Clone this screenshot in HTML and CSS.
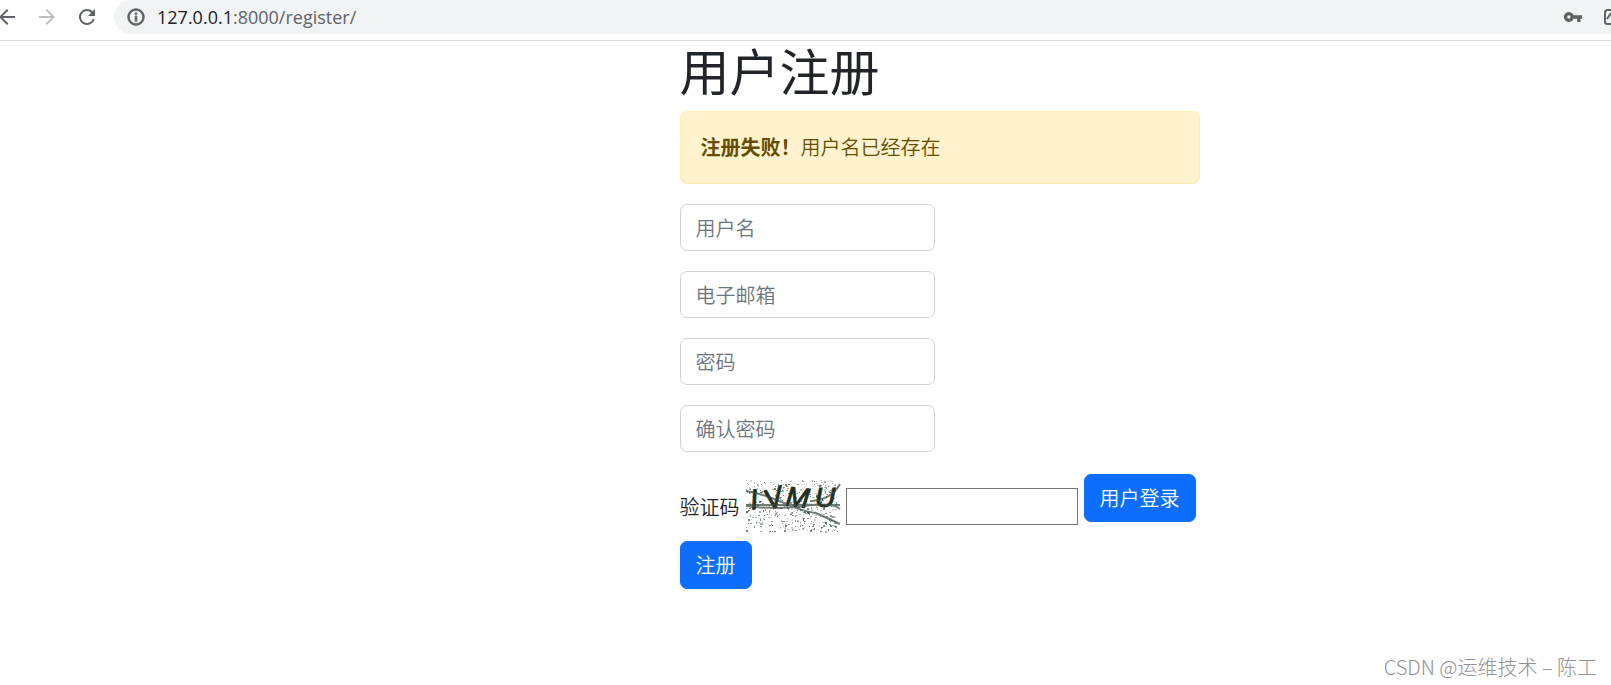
FILE: index.html
```html
<!DOCTYPE html>
<html lang="zh-CN">
<head>
<meta charset="utf-8">
<meta name="viewport" content="width=device-width, initial-scale=1">
<title>用户注册</title>
<link rel="stylesheet" href="styles.css">
</head>
<body>
<header class="toolbar">
  <nav class="nav-buttons">
    <button type="button" class="icon-button" aria-label="后退"><svg viewBox="0 0 24 24"><path d="M20 11H7.8l5.6-5.6L12 4l-8 8 8 8 1.4-1.4L7.8 13H20z"/></svg></button>
    <button type="button" class="icon-button muted" aria-label="前进"><svg viewBox="0 0 24 24"><path d="M12 4l-1.4 1.4 5.6 5.6H4v2h12.2l-5.6 5.6L12 20l8-8z"/></svg></button>
    <button type="button" class="icon-button" aria-label="刷新"><svg viewBox="0 0 24 24"><path d="M17.65 6.35A8 8 0 1 0 19.73 14h-2.08A6 6 0 1 1 12 6c1.66 0 3.14.69 4.22 1.78L13 11h7V4z"/></svg></button>
  </nav>
  <div class="address">
    <svg class="info" viewBox="0 0 24 24"><path d="M11 7h2v2h-2zm0 4h2v6h-2zm1-9a10 10 0 1 0 0 20 10 10 0 0 0 0-20zm0 18a8 8 0 1 1 0-16 8 8 0 0 1 0 16z"/></svg>
    <span class="url"><span class="host">127.0.0.1</span>:8000/register/</span>
    <svg class="key" viewBox="0 0 24 24"><path d="M12.65 10A6 6 0 1 0 12.65 14H17v4h4v-4h2v-4zM7 14a2 2 0 1 1 0-4 2 2 0 0 1 0 4z"/></svg>
    <svg class="edge" viewBox="0 0 8 18"><path d="M9 2H4.500Q2 2 2 4.500v9Q2 16 4.500 16H9M4 11l4-6" /></svg>
  </div>
</header>
<main class="page">
  <h1 class="title">用户注册</h1>
  <div class="alert" role="alert"><strong>注册失败！</strong>用户名已经存在</div>
  <form class="form">
    <input class="field" type="text" placeholder="用户名" aria-label="用户名">
    <input class="field" type="email" placeholder="电子邮箱" aria-label="电子邮箱">
    <input class="field" type="password" placeholder="密码" aria-label="密码">
    <input class="field" type="password" placeholder="确认密码" aria-label="确认密码">
    <div class="verify">
      <div class="verify-code">
        <label for="code">验证码</label>
        <svg class="captcha" viewBox="0 0 94 53" role="img" aria-label="验证码图片">
          <g class="specks"></g>
          <g class="letters">
            <text x="4" y="29" transform="rotate(-8 8 18)">I</text>
            <text x="18" y="28" transform="rotate(-18 26 18)">V</text>
            <text x="40" y="27" transform="rotate(6 52 18)">M</text>
            <text x="69" y="27">U</text>
          </g>
          <path class="scratch" d="M0 11Q18 14 38 23T70 33L94 44M0 26Q30 30 58 26T94 29M66 21Q86 19 94 4M0 25H94"/>
        </svg>
        <input id="code" class="code" type="text">
      </div>
      <a class="button" href="#">用户登录</a>
    </div>
    <button class="button register" type="submit">注册</button>
  </form>
</main>
<footer class="watermark">CSDN @运维技术 – 陈工</footer>
<script src="captcha.js"></script>
</body>
</html>
```

FILE: styles.css
```css
* { box-sizing: border-box; }
body {
  margin: 0;
  min-height: 100vh;
  display: flex;
  flex-direction: column;
  overflow-x: hidden;
  background: #fff;
  color: #212529;
  font-family: "Noto Sans CJK SC", sans-serif;
  font-size: 20px;
  font-weight: 350;
  line-height: 30px;
}
svg { display: block; flex: none; }
.toolbar {
  display: flex;
  height: 41px;
  padding-bottom: 6px;
  border-bottom: 1px solid #dadce0;
}
.nav-buttons { display: flex; align-items: center; gap: 16px; margin-left: -5px; }
.icon-button { padding: 0; border: 0; background: none; }
.icon-button svg { width: 24px; height: 24px; fill: #5f6368; }
.icon-button.muted svg { fill: #bdc1c6; }
.address {
  flex: 1;
  display: flex;
  align-items: center;
  margin-left: 15px;
  padding-left: 12px;
  border-radius: 18px 0 0 18px;
  background: #f1f3f4;
  fill: #5f6368;
}
.info { width: 20px; height: 20px; stroke: #5f6368; stroke-width: 1; }
.url {
  flex: 1;
  margin-left: 11px;
  color: #5f6368;
  font-family: "Open Sans", sans-serif;
  font-size: 18px;
  font-weight: 400;
}
.host { color: #202124; }
.key { width: 20px; height: 20px; margin-right: 20px; }
.edge { width: 8px; height: 18px; fill: none; stroke: #5f6368; stroke-width: 2; }
.page { width: 520px; max-width: 100%; margin-left: calc(50% - 126px); }
.title { margin: 0 0 14px; font-size: 50px; font-weight: 400; line-height: 56px; }
.alert {
  margin-bottom: 20px;
  padding: 20px 20px 21px;
  border: 1px solid #ffecb5;
  border-radius: 7px;
  background: #fff3cd;
  color: #664d03;
}
.alert strong { font-weight: 700; }
.form { display: flex; flex-direction: column; align-items: flex-start; gap: 20px; }
.field {
  width: 255px;
  height: 47px;
  padding: 0 15px;
  border: 1px solid #ced4da;
  border-radius: 7px;
  background: #fff;
  font: inherit;
}
.field::placeholder { color: #6c757d; opacity: 1; }
.verify { display: flex; align-items: flex-start; gap: 6px; padding-top: 2px; }
.verify-code { display: flex; align-items: center; gap: 6px; padding-top: 6px; }
.captcha { width: 94px; height: 53px; overflow: visible; }
.letters {
  fill: #1d3023;
  stroke: #1d3023;
  font: italic 400 28px "Liberation Sans", sans-serif;
}
.specks { fill: #34473a; }
.scratch { fill: none; stroke: #34473a; stroke-width: 2; opacity: .7; }
.code { width: 232px; height: 37px; border: 1px solid #767676; font: inherit; }
.button {
  padding: 8px 15px;
  border: 1px solid #0d6efd;
  border-radius: 7px;
  background: #0d6efd;
  color: #fff;
  font: inherit;
  text-decoration: none;
  white-space: nowrap;
}
.register { margin-top: -12px; }
.watermark {
  margin: auto 14px 3px auto;
  color: #929292;
  font-weight: 300;
}
```

FILE: captcha.js
```javascript
// Sprinkles repeatable noise over the verification image.
const specks = document.querySelector('.specks');
let seed = 7;
function next() {
  seed = (seed * 16807) % 2147483647;
  return seed / 2147483647;
}
for (let i = 0; i < 420; i++) {
  const dot = document.createElementNS('http://www.w3.org/2000/svg', 'rect');
  dot.setAttribute('x', Math.floor(next() * 92));
  dot.setAttribute('y', Math.floor(next() * 52));
  dot.setAttribute('width', next() > 0.6 ? 2 : 1);
  dot.setAttribute('height', next() > 0.7 ? 2 : 1);
  dot.setAttribute('opacity', (0.2 + next() * 0.5).toFixed(2));
  specks.appendChild(dot);
}
```
